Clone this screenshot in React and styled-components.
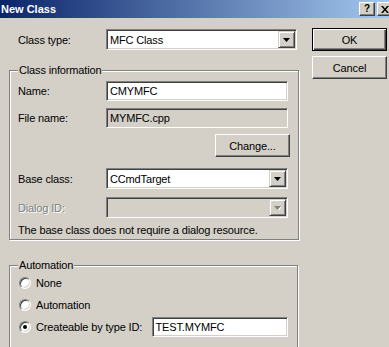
import React from 'react';
import styled, { createGlobalStyle } from 'styled-components';

const Global = createGlobalStyle`
  html, body {
    margin: 0;
    padding: 0;
    background: #d4d0c8;
  }
  body {
    font-family: "Liberation Sans", Arial, sans-serif;
    font-size: 11px;
    letter-spacing: -0.15px;
    color: #000;
  }
`;

const Screen = styled.div`
  width: 389px;
  height: 347px;
  overflow: hidden;
`;

const Dialog = styled.div`
  width: 395px;
  height: 347px;
  background: #d4d0c8;
`;

const TitleBar = styled.div`
  height: 18px;
  display: flex;
  align-items: center;
  padding: 0 2px 0 1px;
  background: linear-gradient(to right, #0a246a, #a6caf0);
  color: #fff;
  font-weight: bold;
  font-size: 11px;
  letter-spacing: 0;
`;

const TitleText = styled.span`
  flex: 1;
`;

const CaptionBtns = styled.div`
  display: flex;
  gap: 2px;
`;

const CaptionBtn = styled.div`
  width: 14px;
  height: 12px;
  background: #d4d0c8;
  border: 1px solid;
  border-color: #fff #404040 #404040 #fff;
  box-shadow: inset -1px -1px 0 #808080;
  color: #000;
  font-size: 10px;
  font-weight: bold;
  display: flex;
  align-items: center;
  justify-content: center;
  line-height: 1;
`;

const Body = styled.div`
  display: flex;
  padding: 10px 0 0 9px;
`;

const LeftCol = styled.div`
  width: 290px;
`;

const RightCol = styled.div`
  margin-left: 13px;
  display: flex;
  flex-direction: column;
  gap: 5px;
`;

const TopRow = styled.div`
  display: flex;
  align-items: center;
  height: 21px;
  margin-top: 1px;
  padding-left: 9px;
`;

const Label = styled.span`
  width: 88px;
  flex-shrink: 0;
  color: ${(p) => (p.$disabled ? '#808080' : '#000')};
  text-shadow: ${(p) => (p.$disabled ? '1px 1px 0 #fff' : 'none')};
`;

const Group = styled.fieldset`
  margin: ${(p) => p.$top}px 0 0 0;
  width: ${(p) => p.$width}px;
  box-sizing: border-box;
  padding: ${(p) => p.$padTop}px 9px ${(p) => p.$padBottom}px 8px;
  border: 1px solid #808080;
  box-shadow: 1px 1px 0 #fff, inset 1px 1px 0 #fff;
  min-width: 0;
`;

const Legend = styled.legend`
  padding: 0 1px;
  margin: 0;
  line-height: 13px;
  background: #d4d0c8;
`;

const FormRow = styled.div`
  display: flex;
  align-items: center;
  height: ${(p) => p.$h || 20}px;
  margin-top: ${(p) => p.$mt || 0}px;
  justify-content: ${(p) => (p.$end ? 'flex-end' : 'flex-start')};
`;

const Sunken = styled.div`
  box-sizing: border-box;
  width: ${(p) => p.$w}px;
  height: ${(p) => p.$h || 20}px;
  border: 1px solid;
  border-color: #808080 #fff #fff #808080;
  box-shadow: inset 1px 1px 0 #404040, inset -1px -1px 0 #d4d0c8;
  background: ${(p) => (p.$gray ? '#d4d0c8' : '#fff')};
  display: flex;
  align-items: center;
  padding: 0 2px 0 2px;
  white-space: nowrap;
`;

const FieldText = styled.span`
  flex: 1;
  padding-left: 1px;
`;

const ArrowBtn = styled.div`
  width: 15px;
  height: 15px;
  background: #d4d0c8;
  border: 1px solid;
  border-color: #d4d0c8 #404040 #404040 #d4d0c8;
  box-shadow: inset 1px 1px 0 #fff, inset -1px -1px 0 #808080;
  display: flex;
  align-items: center;
  justify-content: center;
  margin-right: -1px;
`;

const Button = styled.div`
  box-sizing: border-box;
  width: 75px;
  height: 23px;
  display: flex;
  align-items: center;
  justify-content: center;
  background: #d4d0c8;
  border: 1px solid;
  border-color: ${(p) => (p.$default ? '#000' : '#fff #404040 #404040 #fff')};
  box-shadow: ${(p) =>
    p.$default
      ? 'inset 1px 1px 0 #fff, inset -1px -1px 0 #404040, inset -2px -2px 0 #808080'
      : 'inset -1px -1px 0 #808080'};
  margin-right: ${(p) => p.$mr || 0}px;
`;

const Note = styled.div`
  margin-top: 6px;
  line-height: 13px;
`;

const RadioRow = styled.label`
  display: flex;
  align-items: center;
  height: 20px;
  margin-top: ${(p) => p.$mt || 0}px;
  padding-left: 1px;
`;

const RadioDot = styled.span`
  box-sizing: border-box;
  width: 12px;
  height: 12px;
  border-radius: 50%;
  border: 1px solid;
  border-color: #808080 #fff #fff #808080;
  box-shadow: inset 1px 1px 0 #404040, inset -1px -1px 0 #d4d0c8;
  background: #fff;
  display: flex;
  align-items: center;
  justify-content: center;
  margin-right: 5px;
  flex-shrink: 0;

  &::after {
    content: '';
    width: 4px;
    height: 4px;
    border-radius: 50%;
    background: ${(p) => (p.$checked ? '#000' : 'transparent')};
  }
`;

const RadioText = styled.span`
  width: ${(p) => p.$w || 'auto'};
`;

const Arrow = ({ disabled }) => (
  <svg width="7" height="4" viewBox="0 0 7 4">
    {disabled && <path d="M1 1h7L4.5 4.5z" fill="#fff" />}
    <path d="M0 0h7L3.5 4z" fill={disabled ? '#808080' : '#000'} />
  </svg>
);

const Combo = ({ value, width, disabled }) => (
  <Sunken $w={width} $h={21} $gray={disabled}>
    <FieldText>{value}</FieldText>
    <ArrowBtn>
      <Arrow disabled={disabled} />
    </ArrowBtn>
  </Sunken>
);

const Radio = ({ label, checked, mt, w, children }) => (
  <RadioRow $mt={mt}>
    <RadioDot $checked={checked} />
    <RadioText $w={w}>{label}</RadioText>
    {children}
  </RadioRow>
);

const App = () => {
  return (
    <Screen>
      <Global />
      <Dialog>
        <TitleBar>
          <TitleText>New Class</TitleText>
          <CaptionBtns>
            <CaptionBtn>?</CaptionBtn>
            <CaptionBtn>
              <svg width="8" height="7" viewBox="0 0 8 7">
                <path d="M0 0h2l2 2.5L6 0h2L5 3.5 8 7H6L4 4.5 2 7H0l3-3.5z" fill="#000" />
              </svg>
            </CaptionBtn>
          </CaptionBtns>
        </TitleBar>
        <Body>
          <LeftCol>
            <TopRow>
              <Label>Class type:</Label>
              <Combo value="MFC Class" width={191} />
            </TopRow>

            <Group $top={14} $width={290} $padTop={4} $padBottom={2}>
              <Legend>Class information</Legend>
              <FormRow>
                <Label>Name:</Label>
                <Sunken $w={182}>
                  <FieldText>CMYMFC</FieldText>
                </Sunken>
              </FormRow>
              <FormRow $mt={7}>
                <Label>File name:</Label>
                <Sunken $w={182} $gray>
                  <FieldText>MYMFC.cpp</FieldText>
                </Sunken>
              </FormRow>
              <FormRow $mt={6} $h={23} $end>
                <Button $mr={-1}>Change...</Button>
              </FormRow>
              <FormRow $mt={11} $h={21}>
                <Label>Base class:</Label>
                <Combo value="CCmdTarget" width={182} />
              </FormRow>
              <FormRow $mt={8} $h={21}>
                <Label $disabled>Dialog ID:</Label>
                <Combo value="" width={182} disabled />
              </FormRow>
              <Note>The base class does not require a dialog resource.</Note>
            </Group>

            <Group $top={19} $width={289} $padTop={1} $padBottom={10}>
              <Legend>Automation</Legend>
              <Radio label="None" />
              <Radio label="Automation" mt={2} />
              <Radio label="Createable by type ID:" checked mt={2} w="116px">
                <Sunken $w={137}>
                  <FieldText>TEST.MYMFC</FieldText>
                </Sunken>
              </Radio>
            </Group>
          </LeftCol>
          <RightCol>
            <Button $default>OK</Button>
            <Button>Cancel</Button>
          </RightCol>
        </Body>
      </Dialog>
    </Screen>
  );
};

export default App;
